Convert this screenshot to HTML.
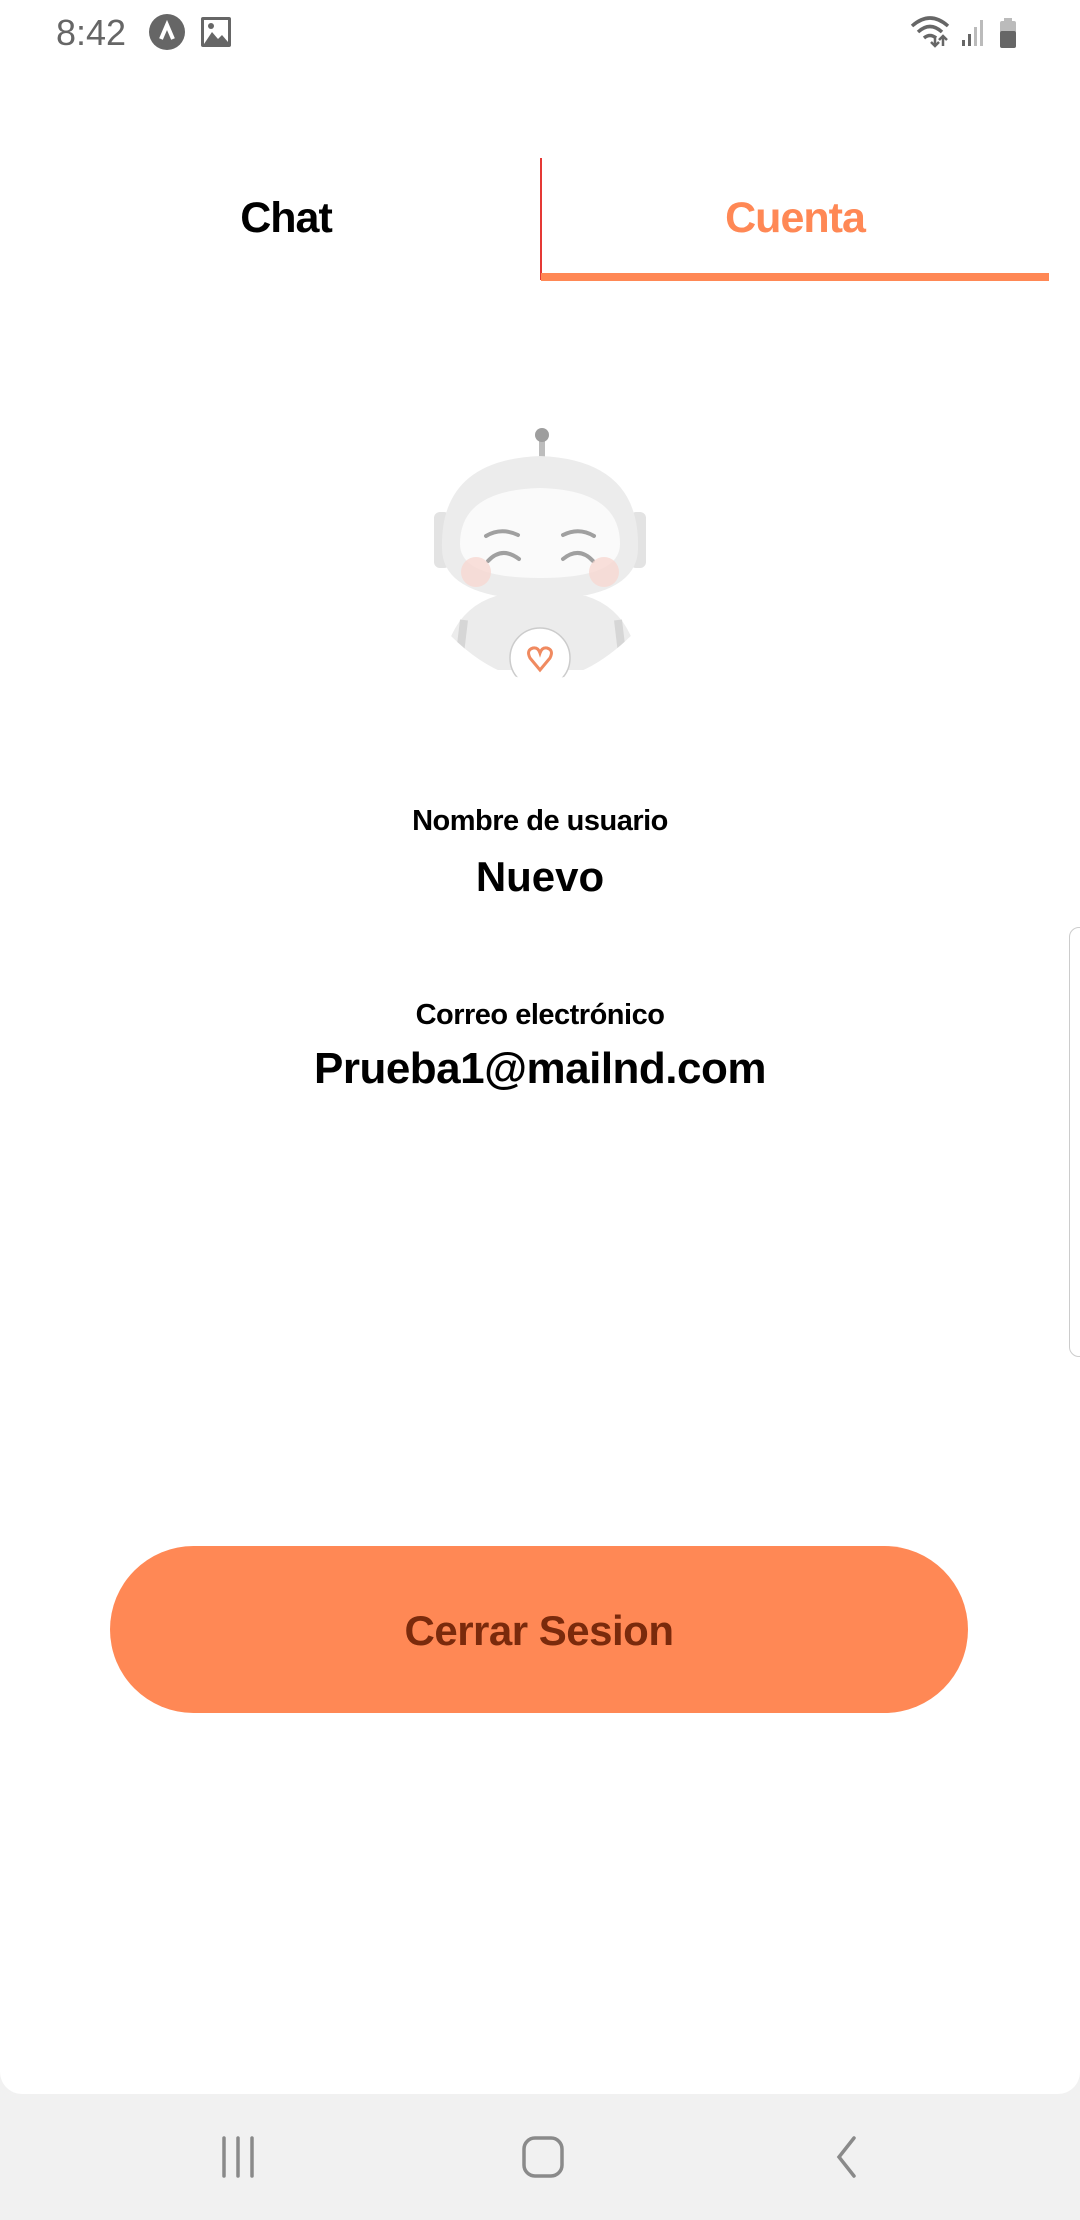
<!DOCTYPE html>
<html><head><meta charset="utf-8"><style>
*{margin:0;padding:0;box-sizing:border-box}
html,body{width:1080px;height:2220px;overflow:hidden;background:#f1f1f1;font-family:"Liberation Sans",Roboto,sans-serif}
.screen{position:absolute;left:0;top:0;width:1080px;height:2094px;background:#fff;border-radius:0 0 22px 22px}
.abs{position:absolute}
.c{position:absolute;left:0;width:1080px;text-align:center}
</style></head><body>
<div class="screen">
  <div class="abs" style="left:56px;top:12px;font-size:36px;color:#666;">8:42</div>
  <svg class="abs" style="left:148px;top:13px" width="38" height="38" viewBox="0 0 38 38"><circle cx="19" cy="19" r="18" fill="#666"/><path d="M13 26 L19 12 L25 26" stroke="#fff" stroke-width="4" fill="none"/></svg>
  <svg class="abs" style="left:200px;top:16px" width="32" height="32" viewBox="0 0 32 32"><rect x="1" y="1" width="30" height="30" rx="2" fill="#666"/><rect x="4" y="4" width="24" height="24" fill="#fff"/><path d="M4 28 L12 16 L18 23 L22 19 L28 26 L28 28Z" fill="#666"/><circle cx="11" cy="10" r="3" fill="#666"/></svg>
  <svg class="abs" style="left:910px;top:14px" width="120" height="36" viewBox="0 0 120 36"><path d="M2 12 Q20 -4 38 12" stroke="#666" stroke-width="3.5" fill="none"/><path d="M8 18 Q20 7 32 18" stroke="#666" stroke-width="3.5" fill="none"/><path d="M14 24 Q20 19 26 24" stroke="#666" stroke-width="3.5" fill="none"/><path d="M25 22 v10 M21 28 l4 4 4-4 M33 32 v-10 M29 26 l4-4 4 4" stroke="#666" stroke-width="2.5" fill="none"/><rect x="52" y="26" width="3" height="6" fill="#666"/><rect x="58" y="20" width="3" height="12" fill="#666"/><rect x="64" y="13" width="3" height="19" fill="#bbb"/><rect x="70" y="6" width="3" height="26" fill="#bbb"/><rect x="94" y="4" width="8" height="4" fill="#bbb"/><rect x="90" y="7" width="16" height="12" rx="2" fill="#bbb"/><rect x="90" y="17" width="16" height="17" rx="2" fill="#666"/></svg>

  <div class="abs" style="left:540px;top:158px;width:1.5px;height:122px;background:#e53935"></div>
  <div class="abs" style="left:541px;top:273px;width:508px;height:8px;background:#ff8855"></div>
  <div class="abs" style="left:0;top:194px;width:572px;text-align:center;font-size:43px;font-weight:bold;color:#000;letter-spacing:-1px">Chat</div>
  <div class="abs" style="left:541px;top:194px;width:508px;text-align:center;font-size:43px;font-weight:bold;color:#ff8855;letter-spacing:-1px">Cuenta</div>

  <svg class="abs" style="left:432px;top:420px" width="216" height="260" viewBox="-4 0 216 260">
    <defs><clipPath id="bd"><path d="M0 200 Q104 320 210 200 L210 120 L0 120Z"/></clipPath></defs>
    <rect x="103" y="18" width="6" height="24" rx="3" fill="#bdbdbd"/>
    <circle cx="106" cy="15" r="7" fill="#9e9e9e"/>
    <g clip-path="url(#bd)"><path d="M6 250 Q14 190 60 176 L150 176 Q196 190 204 250Z" fill="#ececec"/>
    <path d="M28 200 L22 250" stroke="#d6d6d6" stroke-width="8"/><path d="M182 200 L188 250" stroke="#d6d6d6" stroke-width="8"/>
    <circle cx="104" cy="238" r="30" fill="#fff" stroke="#ccc" stroke-width="1.5"/>
    <path d="M104 250 L94 238 Q90 230 97 228 Q102 227 104 233 Q106 227 111 228 Q118 230 114 238Z" fill="none" stroke="#f08a60" stroke-width="3"/></g>
    <rect x="-2" y="92" width="16" height="56" rx="6" fill="#e3e3e3"/><rect x="194" y="92" width="16" height="56" rx="6" fill="#e3e3e3"/>
    <path d="M6 128 Q4 40 104 36 Q204 40 202 128 Q202 178 104 180 Q6 178 6 128Z" fill="#ececec"/>
    <path d="M24 124 Q24 70 104 68 Q184 70 184 124 Q184 158 104 158 Q24 158 24 124Z" fill="#fafafa"/>
    <path d="M50 116 Q65 107 82 115" stroke="#a0a0a0" stroke-width="4" fill="none" stroke-linecap="round"/>
    <path d="M127 115 Q143 107 158 116" stroke="#a0a0a0" stroke-width="4" fill="none" stroke-linecap="round"/>
    <path d="M52 141 Q66 126 83 139" stroke="#a0a0a0" stroke-width="4" fill="none" stroke-linecap="round"/>
    <path d="M127 139 Q143 126 157 141" stroke="#a0a0a0" stroke-width="4" fill="none" stroke-linecap="round"/>
    <circle cx="40" cy="152" r="15" fill="#f8d8d2" opacity=".8"/><circle cx="168" cy="152" r="15" fill="#f8d8d2" opacity=".8"/>
  </svg>

  <div class="c" style="top:805px;font-size:29px;font-weight:bold;color:#000;letter-spacing:-0.5px">Nombre de usuario</div>
  <div class="c" style="top:853px;font-size:42px;font-weight:bold;color:#000">Nuevo</div>
  <div class="c" style="top:999px;font-size:29px;font-weight:bold;color:#000;letter-spacing:-0.5px">Correo electrónico</div>
  <div class="c" style="top:1044px;font-size:44px;font-weight:bold;color:#000;letter-spacing:-0.5px">Prueba1@mailnd.com</div>

  <div class="abs" style="left:1069px;top:927px;width:20px;height:430px;border:1.5px solid #ccc;border-radius:10px;background:#fff"></div>

  <div class="abs" style="left:110px;top:1546px;width:858px;height:167px;border-radius:84px;background:#ff8855;text-align:center;line-height:170px;font-size:42px;font-weight:bold;color:#7a2a0c;letter-spacing:-0.5px">Cerrar Sesion</div>
</div>
<svg class="abs" style="left:220px;top:2134px" width="44" height="46"><path d="M4 4v38M18 4v38M32 4v38" stroke="#8a8a8a" stroke-width="3.5" stroke-linecap="round"/></svg>
<svg class="abs" style="left:520px;top:2134px" width="48" height="46"><rect x="4" y="4" width="38" height="38" rx="11" fill="none" stroke="#8a8a8a" stroke-width="3.5"/></svg>
<svg class="abs" style="left:830px;top:2134px" width="32" height="46"><path d="M24 4 L9 23 L24 42" fill="none" stroke="#8a8a8a" stroke-width="3.5" stroke-linecap="round"/></svg>
</body></html>
